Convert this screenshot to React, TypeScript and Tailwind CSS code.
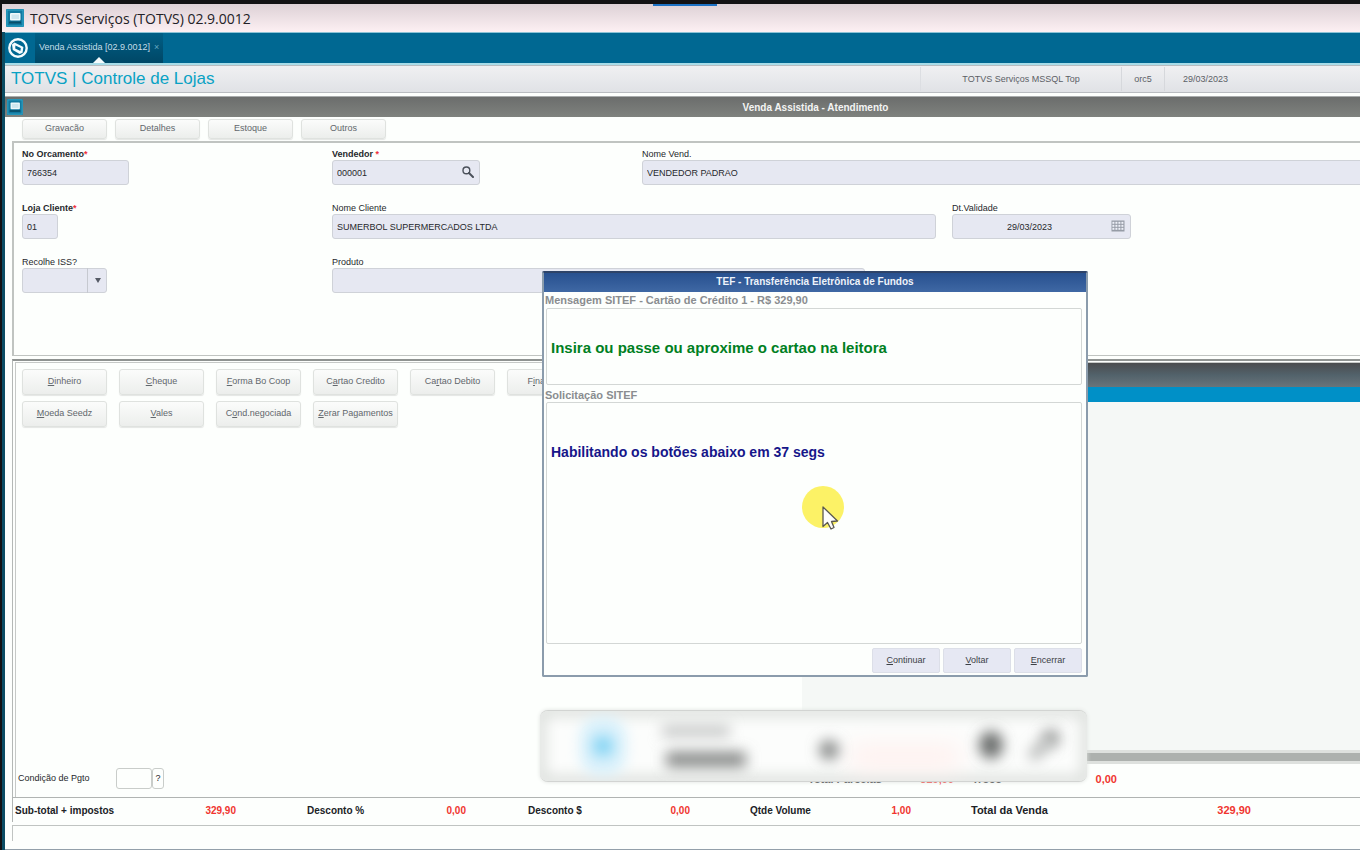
import type { ReactNode } from 'react';

const SANS = "font-['Liberation_Sans',Arial,sans-serif]";

const tabs = ['Gravacão', 'Detalhes', 'Estoque', 'Outros'];

// [before, shortcut letter, after]
const payments: [string, string, string][] = [
  ['', 'D', 'inheiro'],
  ['', 'C', 'heque'],
  ['', 'F', 'orma Bo Coop'],
  ['C', 'a', 'rtao Credito'],
  ['Ca', 'r', 'tao Debito'],
  ['F', 'i', 'nanciado'],
  ['', 'M', 'oeda Seedz'],
  ['', 'V', 'ales'],
  ['C', 'o', 'nd.negociada'],
  ['', 'Z', 'erar Pagamentos'],
];

const dialogButtons: [string, string][] = [
  ['C', 'ontinuar'],
  ['V', 'oltar'],
  ['E', 'ncerrar'],
];

function AppIcon({ className }: { className: string }) {
  return (
    <svg viewBox="0 0 18 18" className={className} aria-hidden="true">
      <rect width="18" height="18" rx="1" fill="#1279a0" />
      <rect x="1" y="1" width="16" height="16" fill="none" stroke="#35abcc" />
      <rect x="4" y="4" width="10.5" height="7.5" rx="1" fill="#eef8fb" />
      <rect x="5.5" y="5.5" width="7.5" height="4.5" fill="#cfe6ef" />
      <rect x="3" y="12.5" width="12" height="2" fill="#0a4f6b" />
    </svg>
  );
}

function Logo() {
  return (
    <svg viewBox="0 0 20 20" className="size-5" aria-hidden="true">
      <circle cx="10" cy="10" r="8.7" fill="#006892" stroke="#f5fbfd" strokeWidth="2.4" />
      <path d="M4 6.5 L6.5 4.6 L15.4 9 L14.6 14.8 L11.6 16 L4.8 12 Z" fill="#f5fbfd" />
      <path d="M7.4 7.4 L12.8 10 L12.4 13 L7.2 10.6 Z" fill="#006892" />
    </svg>
  );
}

function SearchIcon() {
  return (
    <svg viewBox="0 0 12 12" className="size-3" fill="none" stroke="#4a505a" aria-hidden="true">
      <circle cx="4.4" cy="4.4" r="3.4" strokeWidth="1.4" />
      <path d="M7 7 L11 11" strokeWidth="2" strokeLinecap="round" />
    </svg>
  );
}

function CalendarIcon() {
  return (
    <svg viewBox="0 0 14 12" className="h-3 w-3.5" aria-hidden="true">
      <rect x="0.5" y="0.5" width="13" height="11" fill="#969ca6" />
      {[1, 4, 7].map((y) =>
        [1, 4, 7, 10].map((x) => (
          <rect key={`${x}-${y}`} x={x + 0.4} y={y + 0.8} width="2" height="2" fill="#eef0f8" />
        ))
      )}
    </svg>
  );
}

const inputClass =
  'block h-[25px] rounded-[3px] border border-[#cfd2d8] bg-[#e6e8f2] text-[9px] text-[#26282c] outline-none';

type FieldProps = {
  id: string;
  label: string;
  value?: string;
  required?: boolean;
  bold?: boolean;
  cell?: string;
  width: string;
  center?: boolean;
  children?: ReactNode;
};

function Field({ id, label, value = '', required, bold, cell = '', width, center, children }: FieldProps) {
  return (
    <div className={`flex flex-col ${cell}`}>
      <label htmlFor={id} className={`h-3 text-[9px] leading-3 text-[#26282c] ${bold ? 'font-bold' : ''}`}>
        {label}
        {required && <span className="text-[#f0303a]">*</span>}
      </label>
      <div className={`relative ${width}`}>
        <input
          id={id}
          defaultValue={value}
          className={`${inputClass} w-full ${center ? 'pr-6 text-center' : 'px-1'}`}
        />
        {children}
      </div>
    </div>
  );
}

function ToolButton({ children, height }: { children: ReactNode; height: string }) {
  return (
    <button
      className={`${height} w-[85px] rounded-[3px] border border-[#dfe2df] bg-linear-to-b from-[#fbfcfb] to-[#eceeec] text-[9px] whitespace-nowrap text-[#62676c] shadow-[0_1px_1px_#e4e6e4]`}
    >
      {children}
    </button>
  );
}

function Total({ label, value, className = '' }: { label: string; value: string; className?: string }) {
  return (
    <div className={`flex items-center justify-between font-bold ${className}`}>
      <span className="text-[#202226]">{label}</span>
      <span className="text-[#f0352f]">{value}</span>
    </div>
  );
}

function TefDialog() {
  return (
    <div
      role="dialog"
      aria-labelledby="tef-title"
      className="absolute top-[271px] left-[542px] z-10 flex w-[546px] flex-col rounded-xs border-2 border-[#8b9cac] border-t-[#2d4368] bg-[#fdfffd]"
    >
      <h2
        id="tef-title"
        className="h-[19px] bg-linear-to-b from-[#27508f] to-[#3f68a4] text-center text-[10px] leading-[18px] font-bold text-[#eef3fa]"
      >
        TEF - Transferência Eletrônica de Fundos
      </h2>
      <p className="h-4 px-px text-[11px] leading-4 font-bold text-[#8a8d90]">
        Mensagem SITEF - Cartão de Crédito 1 - R$ 329,90
      </p>
      <div className="mr-1 ml-0.5 flex h-[77px] items-center rounded-xs border border-[#d3d7d5] px-1 pt-1 text-[15px] font-bold text-[#00801f]">
        Insira ou passe ou aproxime o cartao na leitora
      </div>
      <p className="h-[17px] px-px text-[11px] leading-5 font-bold text-[#8a8d90]">Solicitação SITEF</p>
      <div className="mr-1 ml-0.5 h-[242px] rounded-xs border border-[#d3d7d5] px-1 pt-[39px] text-[14px] leading-5 font-bold text-[#16168a]">
        Habilitando os botões abaixo em 37 segs
      </div>
      <div className="flex justify-end gap-[3px] px-1 pt-1 pb-0.5">
        {dialogButtons.map(([key, rest]) => (
          <button
            key={rest}
            className="h-[25px] w-17 rounded-xs border border-[#dcdfe8] bg-[#e6e8f3] text-[9px] text-[#3c4046]"
          >
            <u>{key}</u>
            {rest}
          </button>
        ))}
      </div>
    </div>
  );
}

// screen-sharing bar, out of focus over the page
function SharingBar() {
  return (
    <div className="absolute top-[710px] left-[540px] z-10 h-[72px] w-[547px] overflow-hidden rounded-lg border-y border-[#d2d4d2] bg-[#fcfdfc] shadow-[0_0_4px_#dfe1df]">
      <svg viewBox="0 0 547 70" className="block h-[70px] w-[547px]" aria-hidden="true">
        <defs>
          <filter id="soft" filterUnits="userSpaceOnUse" x="-60" y="-60" width="667" height="190">
            <feGaussianBlur stdDeviation="7" />
          </filter>
          <filter id="wide" filterUnits="userSpaceOnUse" x="-60" y="-60" width="667" height="190">
            <feGaussianBlur stdDeviation="12" />
          </filter>
        </defs>
        <path d="M0 0 H547 V70 H0 Z" fill="none" stroke="#dde0dd" strokeWidth="12" filter="url(#soft)" />
        <rect x="310" y="34" width="110" height="24" fill="#fff0ee" filter="url(#wide)" />
        <rect x="40" y="6" width="46" height="58" rx="20" fill="#d8f0fb" filter="url(#soft)" />
        <circle cx="63" cy="35" r="10" fill="#7ed2f3" filter="url(#soft)" />
        <rect x="122" y="14" width="68" height="12" fill="#c6c8c7" filter="url(#soft)" />
        <rect x="126" y="41" width="80" height="15" fill="#858786" filter="url(#soft)" />
        <circle cx="289" cy="39" r="10" fill="#858786" filter="url(#soft)" />
        <ellipse cx="451" cy="34" rx="12" ry="14" fill="#6b6d6c" filter="url(#soft)" />
        <circle cx="511" cy="27" r="9" fill="#989a99" filter="url(#soft)" />
        <path d="M491 47 L508 30" stroke="#b4b6b5" strokeWidth="11" filter="url(#soft)" />
      </svg>
    </div>
  );
}

function Pointer() {
  return (
    <svg viewBox="0 0 44 48" className="absolute top-[486px] left-[801px] z-20 h-12 w-11" aria-hidden="true">
      <circle cx="22" cy="21" r="21" fill="#fcf266" />
      <path
        d="M22 21 L22 40.5 L26.5 36.5 L30 43 L33 41.5 L30.5 35.5 L36.5 35 Z"
        fill="#fdfdfb"
        stroke="#5a5850"
        strokeWidth="1.3"
        strokeLinejoin="round"
      />
    </svg>
  );
}

function App() {
  return (
    <div className={`${SANS} relative flex min-h-screen flex-col overflow-hidden bg-[#121214] pt-1 pl-0.5`}>
      <div className="absolute top-1 left-[653px] h-0.5 w-16 bg-[#1c71c4]" />

      {/* window title */}
      <header className="flex h-7 items-center gap-1.5 bg-linear-to-b from-[#ddd1d6] to-[#fdf0f3] px-1 font-['Open_Sans','Noto_Sans',sans-serif] text-[14px] text-[#222126]">
        <AppIcon className="size-[18px]" />
        TOTVS Serviços (TOTVS) 02.9.0012
      </header>

      <div className="flex flex-1 flex-col border-l-3 border-[#0b4c63] bg-[#fdfffd]">
        {/* open programs */}
        <nav className="flex h-[33px] items-stretch border-t border-b-2 border-t-[#8cc3d6] border-b-[#a8dce8] bg-[#006892] pl-[3px]">
          <a href="#" aria-label="Início" className="flex items-center">
            <Logo />
          </a>
          <div className="relative ml-[7px] flex items-center gap-1 bg-linear-to-b from-[#005f86] to-[#004766] px-1 text-[9px] text-[#c3dfe9]">
            <a href="#">Venda Assistida [02.9.0012]</a>
            <button aria-label="Fechar" className="text-[#62a9c4]">×</button>
            <svg viewBox="0 0 12 6" className="absolute bottom-0 left-1/2 h-1.5 w-3 -translate-x-1/2" aria-hidden="true">
              <path d="M0 6 L6 0 L12 6 Z" fill="#f4fafc" />
            </svg>
          </div>
        </nav>

        <div className="flex h-7 items-center border-y border-[#b9bcc0] bg-linear-to-b from-[#f0f0f2] to-[#e0e2e6] pl-1.5">
          <h1 className="flex-1 text-[17px] leading-6 text-[#0aa2c4]">TOTVS | Controle de Lojas</h1>
          <div className="flex h-6 items-center text-[9px] text-[#5c6066]">
            <span className="w-[201px] border-l border-[#dcdee2] text-center leading-6">TOTVS Serviços MSSQL Top</span>
            <span className="w-[43px] border-l border-[#d6d8dc] text-center leading-6">orc5</span>
            <span className="w-[196px] border-l border-[#d6d8dc] pl-[18px] leading-6">29/03/2023</span>
          </div>
        </div>

        <div className="mt-[3px] flex h-[21px] items-center border-t border-[#a9acad] bg-linear-to-b from-[#6b6d6c] to-[#7f827e] pl-0.5">
          <AppIcon className="size-4" />
          <h2 className="flex-1 pl-[248px] text-center text-[10px] font-bold text-[#f3f4f3]">Venda Assistida - Atendimento</h2>
        </div>

        <div className="flex gap-2 py-0.5 pl-[17px]">
          {tabs.map((tab) => (
            <ToolButton key={tab} height="h-5">
              {tab}
            </ToolButton>
          ))}
        </div>

        {/* sale header */}
        <form className="ml-[7px] grid grid-cols-[310px_310px_310px_1fr] gap-y-[17px] border-t-2 border-b border-l-2 border-[#c0c4c1] pt-[5px] pb-[62px] pl-2">
          <Field id="orc" label="No Orcamento" value="766354" required bold width="w-[107px]" />
          <Field id="vend" label="Vendedor " value="000001" required bold width="w-[148px]">
            <button type="button" aria-label="Pesquisar" className="absolute top-1.5 right-1.5">
              <SearchIcon />
            </button>
          </Field>
          <Field id="nvend" label="Nome Vend." value="VENDEDOR PADRAO" cell="col-span-2 -mr-1" width="w-full" />

          <Field id="loja" label="Loja Cliente" value="01" required bold width="w-[36px]" />
          <Field id="cli" label="Nome Cliente" value="SUMERBOL SUPERMERCADOS LTDA" cell="col-span-2" width="w-[604px]" />
          <Field id="val" label="Dt.Validade" value="29/03/2023" width="w-[179px]" center>
            <button type="button" aria-label="Calendário" className="absolute top-1.5 right-1.5">
              <CalendarIcon />
            </button>
          </Field>

          <div className="flex flex-col">
            <label htmlFor="iss" className="h-3 text-[9px] leading-3 text-[#26282c]">
              Recolhe ISS?
            </label>
            <div className="relative w-[85px]">
              <select id="iss" className={`${inputClass} w-full appearance-none`} defaultValue="">
                <option value=""></option>
                <option value="1">Sim</option>
                <option value="2">Não</option>
              </select>
              <span className="pointer-events-none absolute inset-y-0 right-0 flex w-5 items-center justify-center border-l border-[#c6c9d0] text-[#565b66]">
                <svg viewBox="0 0 6 5" className="h-[5px] w-1.5" aria-hidden="true">
                  <path d="M0 0 H6 L3 5 Z" fill="currentColor" />
                </svg>
              </span>
            </div>
          </div>
          <Field id="prod" label="Produto" cell="col-span-2" width="w-[533px]" />
        </form>

        {/* payments and items */}
        <section className="mt-[3px] ml-[7px] flex flex-1 border-t-2 border-l border-t-[#8f9391] border-l-[#b4b8b6] pt-px pl-0.5">
          <div className="flex flex-1 border-t border-l border-[#c6c9c7]">
            <div className="flex flex-1 flex-col">
              <div className="flex max-w-[600px] flex-wrap gap-x-3 gap-y-1.5 pt-1.5 pl-1.5">
                {payments.map(([before, key, after]) => (
                  <ToolButton key={before + key + after} height="h-[26px]">
                    {before}
                    <u>{key}</u>
                    {after}
                  </ToolButton>
                ))}
              </div>
              <div className="mt-auto flex items-center pb-2 pl-0.5 text-[9px] text-[#26282c]">
                <label htmlFor="cond" className="w-[98px]">
                  Condição de Pgto
                </label>
                <input id="cond" className="h-[21px] w-[36px] rounded-[3px] border border-[#c9cdca] bg-[#fdfffd] px-1" />
                <button className="h-[21px] w-3 rounded-[3px] border border-[#c9cdca]">?</button>
              </div>
            </div>

            <div className="flex w-[558px] flex-col">
              <div className="h-6 bg-linear-to-b from-[#4a4c4e] via-[#52626b] to-[#69747a]" />
              <div className="h-[15px] bg-[#0090c7]" />
              <div className="flex-1 bg-[#f5f8f6]" />
              <div className="h-[14px] border-y-3 border-[#dee1de] bg-[#adb1ae]" />
              <div className="flex h-[33px] items-center pb-0.5 pl-1.5 text-[11px]">
                <Total label="Total Parcelas" value="329,90" className="w-[146px]" />
                <Total label="Troco" value="0,00" className="ml-[18px] w-[145px]" />
              </div>
            </div>
          </div>
        </section>

        {/* totals */}
        <footer className="ml-[7px]">
          <div className="grid h-[25px] grid-cols-[292fr_221fr_222fr_221fr_389fr] border-t border-l border-[#b0b4b2] pl-0.5 text-[10px]">
            <Total label="Sub-total + impostos" value="329,90" className="pr-[71px]" />
            <Total label="Desconto %" value="0,00" className="pr-[62px]" />
            <Total label="Desconto $" value="0,00" className="pr-[60px]" />
            <Total label="Qtde Volume" value="1,00" className="pr-[60px]" />
            <Total label="Total da Venda" value="329,90" className="pr-[109px] text-[11px]" />
          </div>
          <div className="mt-[3px] h-4 border-t border-l border-[#c0c4c2]" />
          <div className="-ml-[7px] h-[9px] border-b border-[#93a0aa]" />
        </footer>
      </div>

      <TefDialog />
      <SharingBar />
      <Pointer />
    </div>
  );
}

export default App;
